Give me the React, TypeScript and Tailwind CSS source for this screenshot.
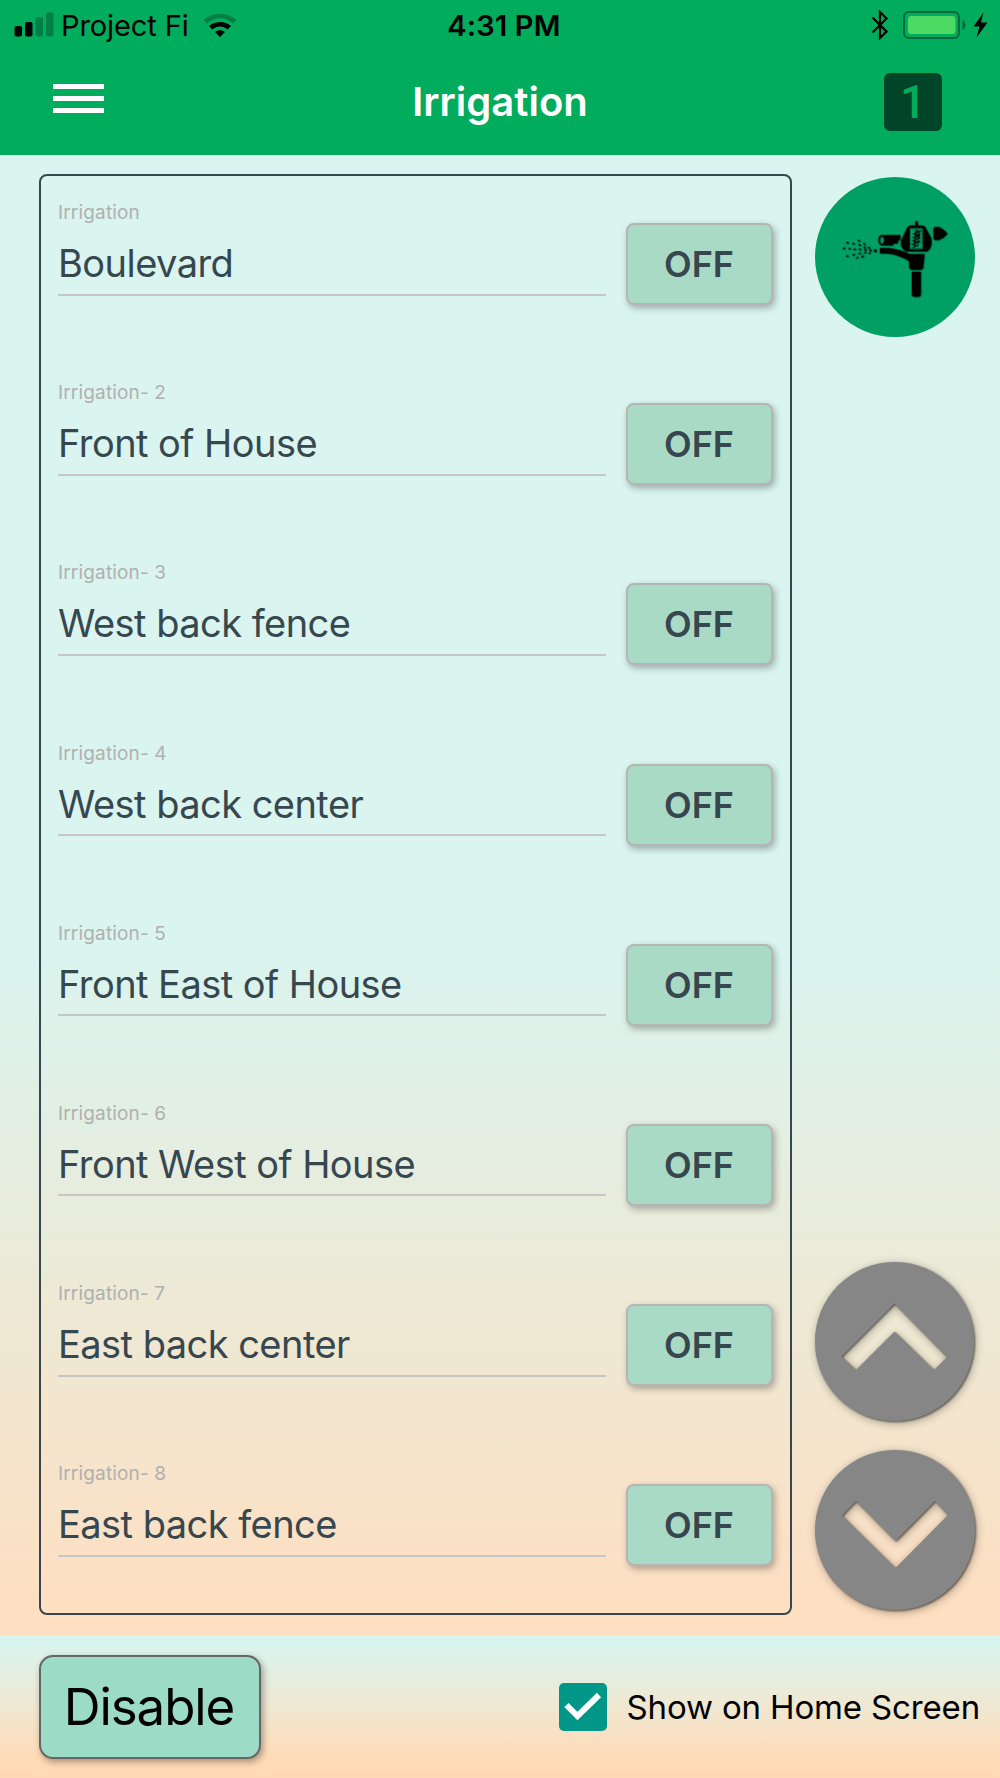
import React, { useState } from 'react';

const zones = [
  { label: 'Irrigation', name: 'Boulevard' },
  { label: 'Irrigation- 2', name: 'Front of House' },
  { label: 'Irrigation- 3', name: 'West back fence' },
  { label: 'Irrigation- 4', name: 'West back center' },
  { label: 'Irrigation- 5', name: 'Front East of House' },
  { label: 'Irrigation- 6', name: 'Front West of House' },
  { label: 'Irrigation- 7', name: 'East back center' },
  { label: 'Irrigation- 8', name: 'East back fence' },
];

// x, y, rotation of every water drop in front of the nozzle
const drops = [
  [28, 83, 15],
  [46, 86, 20],
  [63, 77, 30],
  [65, 90, 25],
  [79, 87, 40],
  [80, 97, 20],
  [93, 98, 35],
  [18, 100, 0],
  [35, 101, 5],
  [50, 103, 0],
  [66, 103, 5],
  [82, 105, 0],
  [97, 106, 0],
  [28, 123, -10],
  [47, 119, -15],
  [58, 128, -25],
  [65, 115, -20],
  [74, 124, -30],
  [82, 113, -15],
  [95, 114, -35],
];

function StatusBar() {
  return (
    <div className="grid h-[50px] grid-cols-3 items-center text-[29px] leading-none text-black">
      <div className="flex items-center pl-[14px]">
        <svg width="40" height="26" viewBox="0 0 40 26">
          <rect x="0.5" y="14" width="7.5" height="10.5" rx="2" fill="#000" />
          <rect x="11" y="10" width="7.5" height="14.5" rx="2" fill="#000" />
          <rect x="21.5" y="5" width="7.5" height="19.5" rx="2" fill="#008047" />
          <rect x="32" y="0.5" width="7.5" height="24" rx="2" fill="#008047" />
        </svg>
        <span className="ml-[7px] tracking-[-0.1px] whitespace-nowrap">Project Fi</span>
        <svg className="ml-[14px]" width="34" height="25" viewBox="0 0 34 25">
          <path d="M0.5 7 C9.5 -1.5 24.5 -1.5 33.5 7 L30 10.5 C22.5 3.5 11.5 3.5 4 10.5 Z" fill="#008047" />
          <path d="M6 13 C12 7.5 22 7.5 28 13 L24.5 16.5 C20 12.5 14 12.5 9.5 16.5 Z" fill="#000" />
          <path d="M12 19 C15 16.5 19 16.5 22 19 L17 24 Z" fill="#000" />
        </svg>
      </div>
      <div className="pl-[8px] text-center font-semibold tracking-[0.2px] whitespace-nowrap">4:31 PM</div>
      <div className="flex items-center justify-end pr-3">
        <svg width="18" height="30" viewBox="0 0 18 30">
          <path d="M1.5 7.5 L15.5 21.5 L9 28 V2 L15.5 8.5 L1.5 22.5" fill="none" stroke="#000" strokeWidth="2.2" />
        </svg>
        <svg className="ml-[14px]" width="64" height="28" viewBox="0 0 64 28">
          <rect x="1" y="1" width="55" height="26" rx="5" fill="none" stroke="#00673a" strokeWidth="2" />
          <rect x="5" y="5" width="47.5" height="18" rx="3" fill="#4cd964" />
          <path d="M59.5 9 C63.5 11 63.5 17 59.5 19 Z" fill="#00673a" />
        </svg>
        <svg className="ml-[6px]" width="15" height="26" viewBox="0 0 15 26">
          <path d="M10.5 0.5 L0.5 14.5 H6.5 L3.5 25.5 L14.5 10.5 H8 Z" fill="#000" />
        </svg>
      </div>
    </div>
  );
}

function Header() {
  return (
    <header className="h-[155px] bg-[#01ac5c]">
      <StatusBar />
      <div className="grid h-[103px] grid-cols-3 items-center">
        <button className="mb-[7px] ml-[53px] flex w-[51px] flex-col gap-[7px]" aria-label="Open menu">
          <span className="h-[5px] w-full bg-white" />
          <span className="h-[5px] w-full bg-white" />
          <span className="h-[5px] w-full bg-white" />
        </button>
        <h1 className="pt-px text-center text-[40px] leading-none font-semibold text-white">Irrigation</h1>
        <div className="mr-[58px] flex h-[58px] w-[58px] items-center justify-center justify-self-end rounded-md bg-[#004528]">
          <span className="font-['Roboto',sans-serif] text-[46px] leading-none font-medium text-[#01ac5c]">1</span>
        </div>
      </div>
    </header>
  );
}

function ZoneRow({ label, name }: { label: string; name: string }) {
  const [on, setOn] = useState(false);

  return (
    <div className="flex h-[180.2px] gap-5 pl-[17px]">
      <div className="h-[119.5px] w-[548px] border-b-[2.5px] border-[#c6c6c6] pt-[25px]">
        <div className="text-[19px] leading-[24px] tracking-[0.16px] text-[#b0b0b0]">{label}</div>
        <div className="mt-[15px] text-[38px] leading-[46px] tracking-[-0.54px] whitespace-nowrap text-[#37474f]">{name}</div>
      </div>
      <button
        onClick={() => setOn((v) => !v)}
        className="mt-[47px] h-[82px] w-[147px] rounded-lg border-2 border-[#b5b5b5] bg-[#a9dac5] pr-px text-[36px] font-semibold text-[#37474f] shadow-[2px_3px_7px_rgba(0,0,0,0.3)]"
      >
        {on ? 'ON' : 'OFF'}
      </button>
    </div>
  );
}

function SprinklerIcon() {
  return (
    <svg width="160" height="160" viewBox="0 0 160 160">
      <circle cx="80" cy="80" r="80" fill="#00a065" />
      <g className="drop-shadow-[2px_2px_2px_rgba(0,0,0,0.3)]" transform="translate(23 38) scale(0.3333)">
        {drops.map(([x, y, angle]) => (
          <ellipse key={`${x}-${y}`} cx={x} cy={y} rx="4.5" ry="2.5" transform={`rotate(${angle} ${x} ${y})`} />
        ))}
        <ellipse cx="112" cy="107" rx="5" ry="4.5" />
        {/* nozzle and arm */}
        <path d="M125 99 H154 Q188 103 217 118 L214 139 Q182 119 149 116 L125 115 Z" />
        <path
          fillRule="evenodd"
          d="M131 60 H187 V75 L180 77 V85 L166 86 V91 H131 C117 91 117 60 131 60 Z M132 65 C124 65 124 86 132 86 C140 86 140 65 132 65 Z"
        />
        {/* body */}
        <path d="M231 31 V22 Q236 12 240 22 V31 H253 Q260 31 263 38 L279 68 Q286 96 268 109 H203 Q183 98 190 74 L207 38 Q210 31 218 31 Z" />
        <rect x="218" y="42" width="34" height="58" fill="#00a065" />
        <rect x="216.5" y="40.5" width="37" height="61" fill="none" stroke="#00a065" strokeWidth="2" />
        <path
          d="M223 98 L236 92 L223 88 L247 80 L223 78 L247 69 L223 67 L247 59 L225 57 L247 49 L232 46 M228 90 L234 46 M239 94 L245 48"
          fill="none"
          stroke="#000"
          strokeWidth="3.2"
        />
        <path d="M286 41 Q288 32 304 36 Q320 44 329 56 Q319 69 304 75 Q288 78 286 70 Z" />
        {/* riser */}
        <path d="M212 117 H260 L256 158 Q254 165 246 165 H223 Q213 164 213 154 Z" />
        <path d="M221 170 H249 V239 Q248 246 235 246 Q222 246 221 239 Z" />
      </g>
    </svg>
  );
}

function ArrowButton({ down = false }: { down?: boolean }) {
  return (
    <button aria-label={down ? 'Scroll down' : 'Scroll up'}>
      <svg
        className="overflow-visible [filter:drop-shadow(1px_1px_1px_rgba(0,0,0,0.55))_drop-shadow(1px_2px_4px_rgba(0,0,0,0.3))]"
        width="160"
        height="160"
        viewBox="0 0 160 160"
      >
        <path
          fillRule="evenodd"
          fill="#868686"
          d={
            down
              ? 'M80 0 A80 80 0 1 1 80 160 A80 80 0 1 1 80 0 Z M80.5 118 L27 65.5 L41 51 L80.5 91 L120 51 L133 65 Z'
              : 'M79.5 0 A79.5 79.5 0 1 1 79.5 159 A79.5 79.5 0 1 1 79.5 0 Z M79.5 41.5 L26.5 94.5 L41 108 L79.5 69.5 L119 108 L132 95 Z'
          }
        />
      </svg>
    </button>
  );
}

export default function App() {
  return (
    <div className="flex h-[1778px] w-[1000px] flex-col overflow-hidden font-['Inter',sans-serif]">
      <Header />
      <main className="flex h-[1480px] bg-[linear-gradient(#daf4ef_0%,#daf4ef_54%,#ecead7_76%,#ffdec0_100%)] pt-[19px] pl-[39px]">
        <section className="h-[1441px] w-[753px] rounded-lg border-2 border-[#37474f]">
          {zones.map((zone) => (
            <ZoneRow key={zone.label} label={zone.label} name={zone.name} />
          ))}
        </section>
        <div className="ml-[23px] flex w-[160px] flex-col pt-[3px]">
          <SprinklerIcon />
          <div className="mt-[925px] flex flex-col gap-[28px]">
            <ArrowButton />
            <ArrowButton down />
          </div>
        </div>
      </main>
      <footer className="flex h-[143px] items-start justify-between bg-[linear-gradient(#d8f4ef_0%,#d8f4ef_5%,#ecead7_42%,#ffdcb8_85%,#ffd9b3_100%)] pt-5 pr-5 pl-[39px]">
        <button className="h-[104px] w-[222px] rounded-[14px] border-2 border-[#666] bg-[#9cdbc5] pt-px pr-[2px] text-[51px] tracking-[-1.1px] shadow-[2px_3px_7px_rgba(0,0,0,0.35)]">
          Disable
        </button>
        <label className="mt-[28px] flex items-center gap-5">
          <svg width="48" height="48" viewBox="0 0 48 48">
            <rect width="48" height="48" rx="5" fill="#009688" />
            <path d="M7.5 22 L18.5 33 L40 12" fill="none" stroke="#fff" strokeWidth="6" />
          </svg>
          <span className="text-[33px] leading-none tracking-[-0.15px]">Show on Home Screen</span>
        </label>
      </footer>
    </div>
  );
}
